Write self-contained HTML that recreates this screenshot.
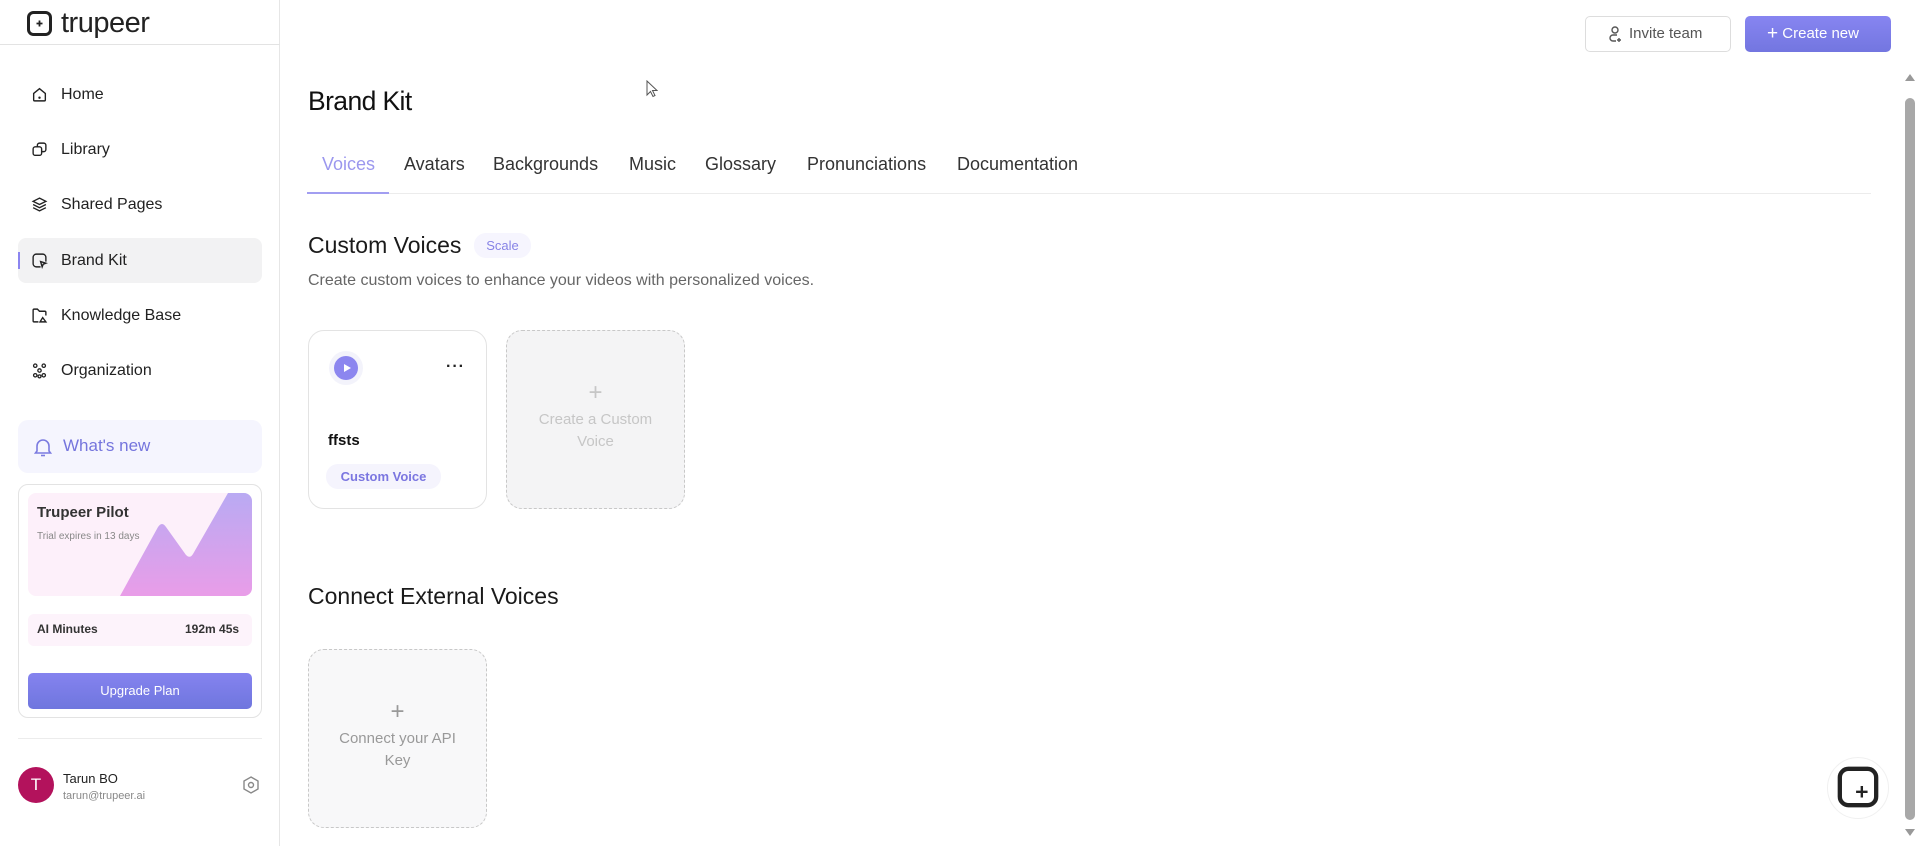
<!DOCTYPE html>
<html><head><meta charset="utf-8"><style>
*{box-sizing:border-box;margin:0;padding:0}
body{width:1920px;height:846px;overflow:hidden;background:#fff;font-family:"Liberation Sans",sans-serif;color:#1a1a1a;position:relative}
.abs{position:absolute}
.side{position:absolute;left:0;top:0;width:280px;height:846px;border-right:1px solid #e6e6e6}
.nav{position:absolute;left:18px;width:244px;height:45px;display:flex;align-items:center;font-size:16px;color:#222}
.nav svg{position:absolute;left:13px;width:17px;height:17px}
.nav span{position:absolute;left:43px}
.tab{position:absolute;top:154px;font-size:18px;color:#333}
.card{position:absolute;border-radius:16px}
.dash{border:1.5px dashed #c8c8c8;background:#f4f4f5;color:#c6c6c6;text-align:center;font-size:15px;line-height:22px}
</style></head><body>
<div class="side">
  <svg class="abs" style="left:26px;top:10px" width="28" height="28" viewBox="0 0 28 28"><rect x="2.5" y="2.5" width="22" height="22" rx="5" fill="none" stroke="#222" stroke-width="3"/><path d="M13.5 10.5v6M10.5 13.5h6" stroke="#222" stroke-width="1.8"/></svg>
  <div class="abs" style="left:61px;top:7px;font-size:29px;font-weight:400;color:#222;letter-spacing:-0.5px">trupeer</div>
  <div class="abs" style="left:0;top:44px;width:280px;height:1px;background:#e3e3e3"></div>

  <div class="nav" style="top:72px"><svg viewBox="0 0 16 16" fill="none" stroke="#222" stroke-width="1.3"><path d="M2.5 7 8 2.5 13.5 7v6a1 1 0 0 1-1 1h-9a1 1 0 0 1-1-1z"/><circle cx="8" cy="11" r=".5" fill="#222"/></svg><span>Home</span></div>
  <div class="nav" style="top:127px"><svg viewBox="0 0 16 16" fill="none" stroke="#222" stroke-width="1.3"><rect x="2" y="5.5" width="8" height="8" rx="2"/><path d="M6 5.5V4a2 2 0 0 1 2-2h4a2 2 0 0 1 2 2v4a2 2 0 0 1-2 2h-2"/></svg><span>Library</span></div>
  <div class="nav" style="top:182px"><svg viewBox="0 0 16 16" fill="none" stroke="#222" stroke-width="1.3"><path d="M8 2 14 5 8 8 2 5z"/><path d="M2 8l6 3 6-3M2 11l6 3 6-3"/></svg><span>Shared Pages</span></div>
  <div class="nav" style="top:238px;background:#f2f2f3;border-radius:8px"><div class="abs" style="left:0;top:14px;width:2px;height:17px;background:#8b85f0"></div><svg viewBox="0 0 16 16" fill="none" stroke="#222" stroke-width="1.3"><path d="M9 14H5a3 3 0 0 1-3-3V5a3 3 0 0 1 3-3h6a3 3 0 0 1 3 3v4"/><path d="M9 9l5 1.5-2.5 1-1 2.5z"/></svg><span>Brand Kit</span></div>
  <div class="nav" style="top:293px"><svg viewBox="0 0 16 16" fill="none" stroke="#222" stroke-width="1.3"><path d="M7 14H3a1 1 0 0 1-1-1V3a1 1 0 0 1 1-1h3l2 2h5a1 1 0 0 1 1 1v3"/><path d="M8.5 14l2.5-4 3 4z"/></svg><span>Knowledge Base</span></div>
  <div class="nav" style="top:348px"><svg viewBox="0 0 16 16" fill="none" stroke="#222" stroke-width="1.2"><circle cx="4" cy="3.5" r="1.6"/><circle cx="12" cy="3.5" r="1.6"/><circle cx="8" cy="8" r="1.6"/><circle cx="4" cy="12.5" r="1.6"/><circle cx="12" cy="12.5" r="1.6"/><circle cx="8" cy="13.5" r="1.4"/></svg><span>Organization</span></div>

  <div class="abs" style="left:18px;top:420px;width:244px;height:53px;background:#f5f5fe;border-radius:10px"></div>
  <svg class="abs" style="left:32px;top:436px" width="22" height="22" viewBox="0 0 22 22" fill="none" stroke="#7b7be0" stroke-width="1.6"><path d="M5 15V10a6 6 0 0 1 12 0v5l1.5 2h-15z"/><path d="M9 19.5h4"/></svg>
  <div class="abs" style="left:63px;top:436px;font-size:17px;color:#7575dd">What's new</div>

  <div class="abs" style="left:18px;top:484px;width:244px;height:234px;border:1px solid #e3e3e3;border-radius:10px"></div>
  <div class="abs" style="left:28px;top:493px;width:224px;height:103px;border-radius:8px;background:#fdf0fa;overflow:hidden">
    <svg class="abs" style="left:0;top:0" width="224" height="103" viewBox="0 0 224 103"><defs><linearGradient id="g" x1="0" y1="0" x2="0" y2="1"><stop offset="0" stop-color="#b9aaf3"/><stop offset="1" stop-color="#e99de8"/></linearGradient></defs><path d="M92 103 130 34Q134 28 138 34L158 62Q162 66 165 61L200 0H224V103Z" fill="url(#g)"/></svg>
    <div class="abs" style="left:9px;top:11px;font-size:15px;font-weight:bold;color:#333">Trupeer Pilot</div>
    <div class="abs" style="left:9px;top:38px;font-size:10px;color:#888">Trial expires in 13 days</div>
  </div>
  <div class="abs" style="left:28px;top:614px;width:224px;height:32px;background:#fdf3fb;border-radius:6px"></div>
  <div class="abs" style="left:37px;top:622px;font-size:12px;font-weight:bold;color:#333">AI Minutes</div>
  <div class="abs" style="left:185px;top:622px;font-size:12px;font-weight:bold;color:#333">192m 45s</div>
  <div class="abs" style="left:28px;top:673px;width:224px;height:36px;border-radius:5px;background:linear-gradient(#8583ef,#6f76de);color:#fff;font-size:13px;text-align:center;line-height:36px">Upgrade Plan</div>
  <div class="abs" style="left:18px;top:738px;width:244px;height:1px;background:#ececec"></div>
  <div class="abs" style="left:18px;top:767px;width:36px;height:36px;border-radius:50%;background:#b3125c;color:#fff;font-size:17px;text-align:center;line-height:36px">T</div>
  <div class="abs" style="left:63px;top:771px;font-size:13px;color:#222">Tarun BO</div>
  <div class="abs" style="left:63px;top:790px;font-size:11px;color:#888">tarun@trupeer.ai</div>
  <svg class="abs" style="left:241px;top:775px" width="20" height="20" viewBox="0 0 20 20" fill="none" stroke="#888" stroke-width="1.4"><path d="M10 2l7 4v8l-7 4-7-4V6z"/><circle cx="10" cy="10" r="2.5"/></svg>
</div>

<div class="abs" style="left:1585px;top:16px;width:146px;height:36px;border:1px solid #ddd;border-radius:5px"></div>
<svg class="abs" style="left:1608px;top:25px" width="16" height="18" viewBox="0 0 16 18" fill="none" stroke="#555" stroke-width="1.4"><circle cx="7" cy="5" r="3"/><path d="M8 16H5a3 3 0 0 1 0-6h4M11 13v4M9 15h4"/></svg>
<div class="abs" style="left:1629px;top:25px;font-size:15px;color:#555">Invite team</div>
<div class="abs" style="left:1745px;top:16px;width:146px;height:36px;border-radius:5px;background:linear-gradient(#8785f1,#7376e0);color:#fff;font-size:15px;line-height:36px;padding-left:22px"><span style="font-size:19px;vertical-align:-1px">+</span> Create new</div>

<div class="abs" style="left:308px;top:86px;font-size:26.5px;color:#111;letter-spacing:-0.6px">Brand Kit</div>
<svg class="abs" style="left:646px;top:80px" width="12" height="18" viewBox="0 0 12 18"><path d="M1 1v14l3.5-3.5 2.5 5 2-1-2.5-5H11z" fill="#fff" stroke="#555"/></svg>

<div class="tab" style="left:322px;color:#9b97ee">Voices</div>
<div class="tab" style="left:404px">Avatars</div>
<div class="tab" style="left:493px">Backgrounds</div>
<div class="tab" style="left:629px">Music</div>
<div class="tab" style="left:705px">Glossary</div>
<div class="tab" style="left:807px">Pronunciations</div>
<div class="tab" style="left:957px">Documentation</div>
<div class="abs" style="left:307px;top:193px;width:1564px;height:1px;background:#ececec"></div>
<div class="abs" style="left:307px;top:192px;width:82px;height:2px;background:#a29ef1"></div>

<div class="abs" style="left:308px;top:232px;font-size:23px;color:#1a1a1a">Custom Voices</div>
<div class="abs" style="left:474px;top:233px;width:57px;height:25px;border-radius:12px;background:#f6f5fe;color:#8783e6;font-size:13px;text-align:center;line-height:25px">Scale</div>
<div class="abs" style="left:308px;top:272px;font-size:16px;color:#666">Create custom voices to enhance your videos with personalized voices.</div>

<div class="card" style="left:308px;top:330px;width:179px;height:179px;border:1px solid #e3e3e3">
  <div class="abs" style="left:20px;top:20px;width:34px;height:34px;border-radius:50%;background:#f3f3fb"></div>
  <div class="abs" style="left:25px;top:25px;width:24px;height:24px;border-radius:50%;background:#8c86ef"></div>
  <svg class="abs" style="left:33px;top:32px" width="10" height="10" viewBox="0 0 10 10"><path d="M2 1l7 4-7 4z" fill="#fff"/></svg>
  <div class="abs" style="left:137px;top:27px;font-size:16px;font-weight:bold;color:#222;letter-spacing:1px">···</div>
  <div class="abs" style="left:19px;top:101px;font-size:15px;font-weight:bold;color:#111">ffsts</div>
  <div class="abs" style="left:17px;top:133px;width:115px;height:25px;border-radius:12px;background:#f5f4fd;color:#7b76e0;font-size:13px;font-weight:bold;text-align:center;line-height:25px">Custom Voice</div>
</div>
<div class="card dash" style="left:506px;top:330px;width:179px;height:179px;padding-top:50px"><div style="font-size:24px;font-weight:300;line-height:24px;margin-bottom:4px">+</div>Create a Custom<br>Voice</div>

<div class="abs" style="left:308px;top:583px;font-size:23px;color:#1a1a1a">Connect External Voices</div>
<div class="card dash" style="left:308px;top:649px;width:179px;height:179px;padding-top:50px;color:#999;background:#f8f8f9"><div style="font-size:24px;font-weight:300;line-height:24px;margin-bottom:4px">+</div>Connect your API<br>Key</div>

<div class="abs" style="left:1902px;top:62px;width:18px;height:784px;background:#fff"></div>
<svg class="abs" style="left:1904px;top:72px" width="12" height="10"><path d="M1 9 6 2 11 9z" fill="#999"/></svg>
<div class="abs" style="left:1905px;top:98px;width:10px;height:722px;border-radius:5px;background:#a8a8a8"></div>
<svg class="abs" style="left:1904px;top:828px" width="12" height="10"><path d="M1 1 6 8 11 1z" fill="#999"/></svg>

<div class="abs" style="left:1827px;top:757px;width:62px;height:62px;border-radius:50%;background:#fff;border:1px solid #f0f0f0"></div>
<svg class="abs" style="left:1836px;top:765px" width="44" height="44" viewBox="0 0 46 46"><rect x="4" y="4" width="38" height="38" rx="9" fill="none" stroke="#222" stroke-width="4.5"/><path d="M27 22v12M21 28h12" stroke="#222" stroke-width="2.5"/></svg>
</body></html>
